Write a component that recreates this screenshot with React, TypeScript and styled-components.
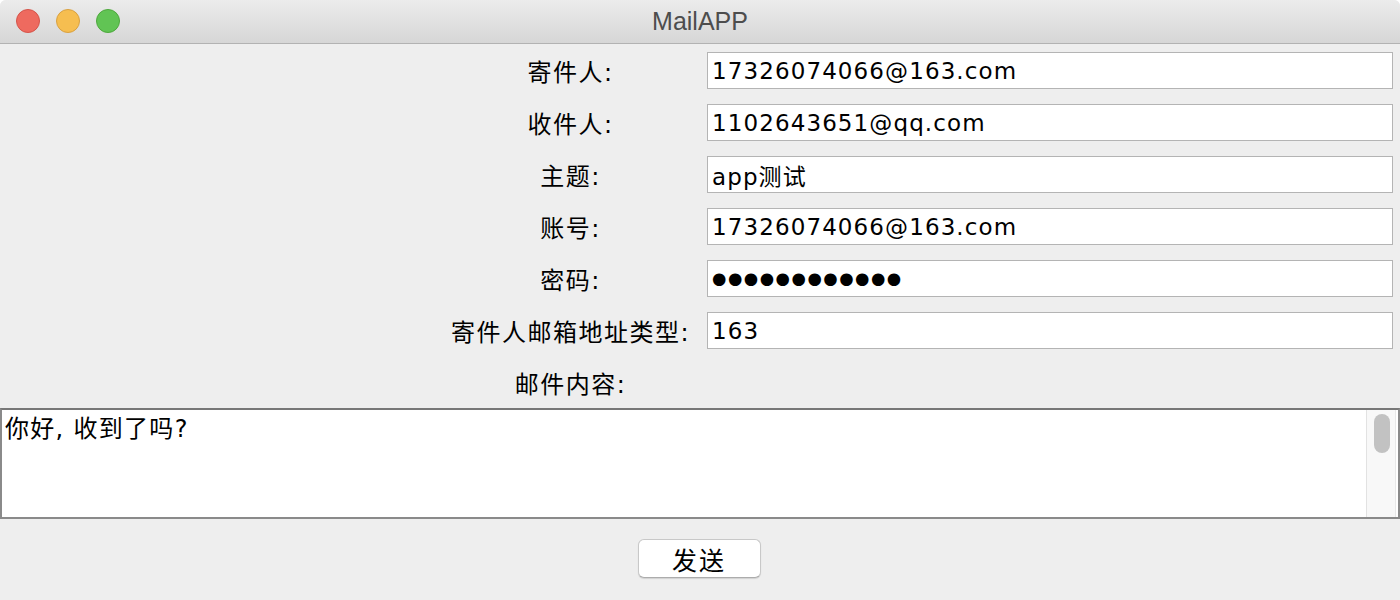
import React from "react";
import styled, { createGlobalStyle } from "styled-components";

const GlobalStyle = createGlobalStyle`
  html, body { margin: 0; padding: 0; background: #ffffff; }
  * { box-sizing: border-box; }
`;

const FONT = `"DejaVu Sans", "Noto Sans CJK SC", sans-serif`;

const Window = styled.div`
  width: 1400px;
  height: 600px;
  display: flex;
  flex-direction: column;
  background: #eeeeee;
  border-radius: 6px 6px 0 0;
  overflow: hidden;
  font-family: ${FONT};
  color: #000;
`;

const TitleBar = styled.div`
  height: 44px;
  flex: none;
  display: flex;
  align-items: center;
  position: relative;
  background: linear-gradient(#ececec, #d6d6d6);
  border-bottom: 1px solid #b2b2b2;
`;

const Lights = styled.div`
  display: flex;
  gap: 16px;
  padding-left: 16px;
  margin-top: -1px;
`;

const Light = styled.span<{ $fill: string; $edge: string }>`
  width: 24px;
  height: 24px;
  border-radius: 50%;
  background: ${(p) => p.$fill};
  border: 1px solid ${(p) => p.$edge};
`;

const Title = styled.div`
  position: absolute;
  left: 0;
  right: 0;
  top: 0;
  bottom: 0;
  display: flex;
  align-items: center;
  justify-content: center;
  font-family: "Liberation Sans", Arial, sans-serif;
  font-size: 25px;
  color: #4d4d4d;
  pointer-events: none;
`;

const Form = styled.div`
  display: grid;
  grid-template-columns: 248px 686px;
  grid-auto-rows: 37px;
  column-gap: 15px;
  row-gap: 15px;
  justify-content: end;
  padding: 8px 7px 0 0;
`;

const Label = styled.div`
  grid-column: 1;
  display: flex;
  align-items: center;
  justify-content: center;
  padding-left: 5px;
  font-size: 24px;
  letter-spacing: 1.5px;
  white-space: nowrap;
`;

const Field = styled.input<{ $secret?: boolean }>`
  grid-column: 2;
  height: 37px;
  border: 1px solid #b4b4b4;
  background: #ffffff;
  padding: 0 4px;
  margin: 0;
  font-family: ${FONT};
  font-size: ${(p) => (p.$secret ? "16.5px" : "23px")};
  letter-spacing: ${(p) => (p.$secret ? "1.5px" : "1.1px")};
  color: #000;
  outline: none;
`;

const ContentBox = styled.div`
  margin-top: 7px;
  height: 111px;
  display: flex;
  background: #ffffff;
  border: 2px solid #8a8a8a;
  border-top-color: #777777;
`;

const ContentText = styled.textarea`
  flex: 1;
  border: none;
  outline: none;
  resize: none;
  margin: 0;
  padding: 4px 3px;
  background: transparent;
  font-family: ${FONT};
  font-size: 24px;
  letter-spacing: 1.3px;
  line-height: 30px;
  color: #000;
  overflow: hidden;
`;

const ScrollTrack = styled.div`
  width: 30px;
  margin-right: 2px;
  flex: none;
  background: #f8f8f8;
  border-left: 1px solid #e2e2e2;
  border-right: 1px solid #e8e8e8;
  padding: 4px 0 0 7px;
`;

const ScrollThumb = styled.div`
  width: 16px;
  height: 39px;
  border-radius: 8px;
  background: #c2c2c2;
`;

const ButtonBar = styled.div`
  flex: 1;
  display: flex;
  justify-content: center;
  align-items: flex-start;
  padding-top: 20px;
`;

const SendButton = styled.button`
  width: 123px;
  height: 39px;
  margin-left: -2px;
  border-radius: 6px;
  border: 1px solid #c8c8c8;
  border-bottom-color: #acacac;
  background: #ffffff;
  box-shadow: 0 1px 1px rgba(0, 0, 0, 0.12);
  font-family: ${FONT};
  font-size: 25px;
  letter-spacing: 2px;
  color: #000;
  padding: 0;
  display: flex;
  align-items: center;
  justify-content: center;
`;

const rows: { label: string; value: string; secret?: boolean }[] = [
  { label: "寄件人:", value: "17326074066@163.com" },
  { label: "收件人:", value: "1102643651@qq.com" },
  { label: "主题:", value: "app测试" },
  { label: "账号:", value: "17326074066@163.com" },
  { label: "密码:", value: "●●●●●●●●●●●●", secret: true },
  { label: "寄件人邮箱地址类型:", value: "163" },
];

export default function App() {
  return (
    <>
      <GlobalStyle />
      <Window>
        <TitleBar>
          <Lights>
            <Light $fill="#ee6a5f" $edge="#d5544a" />
            <Light $fill="#f6be50" $edge="#d9a141" />
            <Light $fill="#61c454" $edge="#4ea83d" />
          </Lights>
          <Title>MailAPP</Title>
        </TitleBar>
        <Form>
          {rows.map((r) => (
            <React.Fragment key={r.label}>
              <Label>{r.label}</Label>
              <Field readOnly value={r.value} $secret={r.secret} />
            </React.Fragment>
          ))}
          <Label>邮件内容:</Label>
        </Form>
        <ContentBox>
          <ContentText readOnly value="你好, 收到了吗?" />
          <ScrollTrack>
            <ScrollThumb />
          </ScrollTrack>
        </ContentBox>
        <ButtonBar>
          <SendButton>发送</SendButton>
        </ButtonBar>
      </Window>
    </>
  );
}
